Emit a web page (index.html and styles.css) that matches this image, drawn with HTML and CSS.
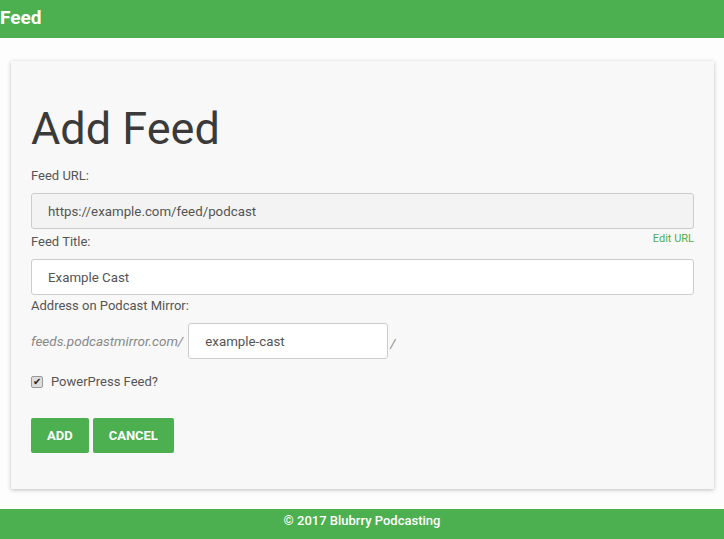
FILE: index.html
```html
<!DOCTYPE html>
<html lang="en">
<head>
    <meta charset="UTF-8">
    <meta name="viewport" content="width=device-width, initial-scale=1.0">
    <title>Add Feed</title>
    <link rel="stylesheet" href="styles.css">
</head>
<body>
    <header class="topbar">Feed</header>

    <main class="card">
        <h1>Add Feed</h1>

        <label class="field-label" for="feedUrl">Feed URL:</label>
        <input class="field field-locked" id="feedUrl" type="text" value="https://example.com/feed/podcast" readonly>

        <div class="label-row">
            <label class="field-label" for="feedTitle">Feed Title:</label>
            <a class="edit-link" href="#">Edit URL</a>
        </div>
        <input class="field" id="feedTitle" type="text" value="Example Cast">

        <label class="field-label field-label-spaced" for="slug">Address on Podcast Mirror:</label>
        <div class="address-row">
            <span class="prefix">feeds.podcastmirror.com/</span>
            <input class="field field-slug" id="slug" type="text" value="example-cast">
            <span class="suffix">/</span>
        </div>

        <label class="check-row">
            <span class="checkbox">&#10004;</span>
            <span>PowerPress Feed?</span>
        </label>

        <div class="actions">
            <button>Add</button>
            <button>Cancel</button>
        </div>
    </main>

    <footer class="bottombar">&copy; 2017 Blubrry Podcasting</footer>
</body>
</html>
```

FILE: styles.css
```css
body {
    margin: 0;
    font-family: Roboto, "Liberation Sans", Arial, sans-serif;
    background-color: #fdfdfd;
    color: #444;
}
.topbar {
    background-color: #4caf50;
    color: white;
    font-size: 19px;
    font-weight: bold;
    height: 38px;
    line-height: 36px;
}
.card {
    display: block;
    margin: 23px 10px 20px 11px;
    background: #f8f8f8;
    padding: 20px 20px 36px 20px;
    box-shadow: 0 1px 4px rgba(0,0,0,0.25);
}
h1 {
    font-size: 45px;
    font-weight: 400;
    color: #3a3a3a;
    margin: 18px 0 9px 0;
    line-height: 60px;
}
.field-label {
    display: block;
    font-size: 13px;
    line-height: 15px;
    color: #555;
    margin-bottom: 10px;
}
.label-row {
    display: flex;
    justify-content: space-between;
    align-items: flex-start;
    margin-top: 5px;
}
.field-label-spaced {
    margin-top: 3px;
}
.field {
    display: block;
    box-sizing: border-box;
    width: 100%;
    height: 36px;
    padding: 0 16px;
    border: 1px solid #ccc;
    border-radius: 3px;
    background: white;
    font-family: inherit;
    font-size: 13.3px;
    color: #555;
    outline: none;
}
.field-locked {
    background: #f3f3f3;
}
.edit-link {
    font-size: 11px;
    line-height: 13px;
    margin-top: -2px;
    color: #4caf50;
    text-decoration: none;
}
.address-row {
    display: flex;
    align-items: center;
}
.prefix {
    font-style: italic;
    font-size: 13.5px;
    color: #888;
    margin-right: 5px;
}
.field-slug {
    width: 200px;
}
.suffix {
    font-style: italic;
    color: #888;
    font-size: 13px;
    margin-left: 2px;
    margin-top: 4px;
}
.check-row {
    display: flex;
    align-items: center;
    margin-top: 15px;
    font-size: 13px;
    line-height: 15px;
    color: #555;
}
.checkbox {
    box-sizing: border-box;
    width: 12px;
    height: 12px;
    margin-right: 8px;
    border: 1px solid #999;
    border-radius: 2px;
    background: #ddd;
    color: #222;
    font-size: 10px;
    line-height: 10px;
    text-align: center;
}
.actions {
    margin-top: 29px;
    display: flex;
    gap: 4px;
}
button {
    background-color: #4caf50;
    color: white;
    border: none;
    border-radius: 2px;
    height: 35px;
    padding: 0 16px;
    font-family: inherit;
    font-size: 13px;
    font-weight: bold;
    text-transform: uppercase;
    cursor: pointer;
}
.bottombar {
    background-color: #4caf50;
    color: white;
    text-align: center;
    font-size: 13px;
    font-weight: 500;
    height: 30px;
    line-height: 24px;
}
```
